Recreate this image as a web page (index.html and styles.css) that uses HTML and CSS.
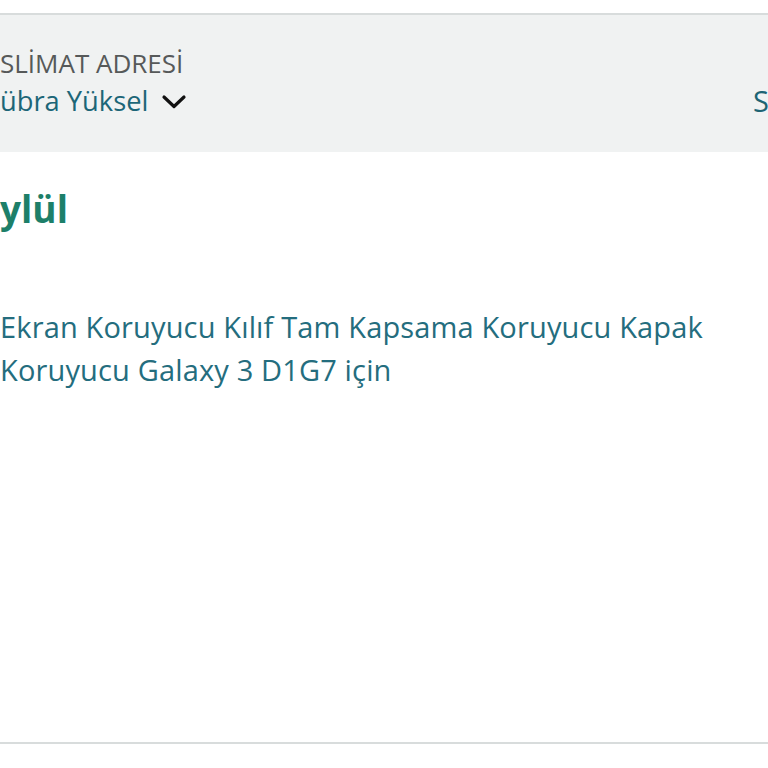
FILE: index.html
```html
<!DOCTYPE html>
<html lang="tr">
<head>
<meta charset="utf-8">
<title>Sipariş</title>
<link rel="stylesheet" href="styles.css">
</head>
<body>
<div class="page">
  <div class="topgap"></div>
  <header class="address-band">
    <div class="address-left">
      <div class="label">SLİMAT ADRESİ</div>
      <div class="name-row">
        <span class="name">übra Yüksel</span>
        <svg class="chevron" width="26" height="16" viewBox="0 0 26 16" aria-hidden="true">
          <path d="M3 3 L13 12.5 L23 3" fill="none" stroke="#111" stroke-width="3.2" stroke-linecap="round" stroke-linejoin="round"/>
        </svg>
      </div>
    </div>
    <div class="address-right">S</div>
  </header>
  <section class="order">
    <h2 class="status">ylül</h2>
    <p class="product">Ekran Koruyucu Kılıf Tam Kapsama Koruyucu Kapak<br>Koruyucu Galaxy 3 D1G7 için</p>
  </section>
</div>
</body>
</html>
```

FILE: styles.css
```css
html, body {
  margin: 0;
  padding: 0;
  background: #ffffff;
}
body {
  font-family: "Open Sans", "Noto Sans", sans-serif;
  width: 768px;
  height: 768px;
  overflow: hidden;
}
.page {
  width: 768px;
}
.topgap {
  height: 13px;
  background: #ffffff;
}
.address-band {
  display: flex;
  justify-content: space-between;
  align-items: flex-end;
  background: #f0f2f2;
  border-top: 2px solid #d8dcdc;
  padding: 33px 0 33px 0;
  height: 71px;
}
.address-left {
  display: flex;
  flex-direction: column;
  gap: 5px;
}
.label {
  font-size: 26px;
  line-height: 30px;
  color: #565959;
  white-space: nowrap;
}
.name-row {
  display: flex;
  align-items: center;
  gap: 13px;
  height: 36px;
}
.name {
  font-size: 27.3px;
  line-height: 36px;
  color: #1c6678;
  white-space: nowrap;
}
.chevron {
  display: block;
  margin-top: 2px;
}
.address-right {
  font-size: 29px;
  line-height: 36px;
  color: #1d6474;
  white-space: nowrap;
  margin-right: -1px;
}
.order {
  height: 592px;
  border-bottom: 2px solid #d8dcdc;
  box-sizing: border-box;
  padding-top: 35px;
}
.status {
  margin: 0;
  font-size: 37px;
  line-height: 44px;
  font-weight: 700;
  color: #1d7f69;
}
.product {
  margin: 74px 0 0 0;
  font-size: 29px;
  line-height: 43px;
  letter-spacing: 0.15px;
  color: #246d7e;
}
```
